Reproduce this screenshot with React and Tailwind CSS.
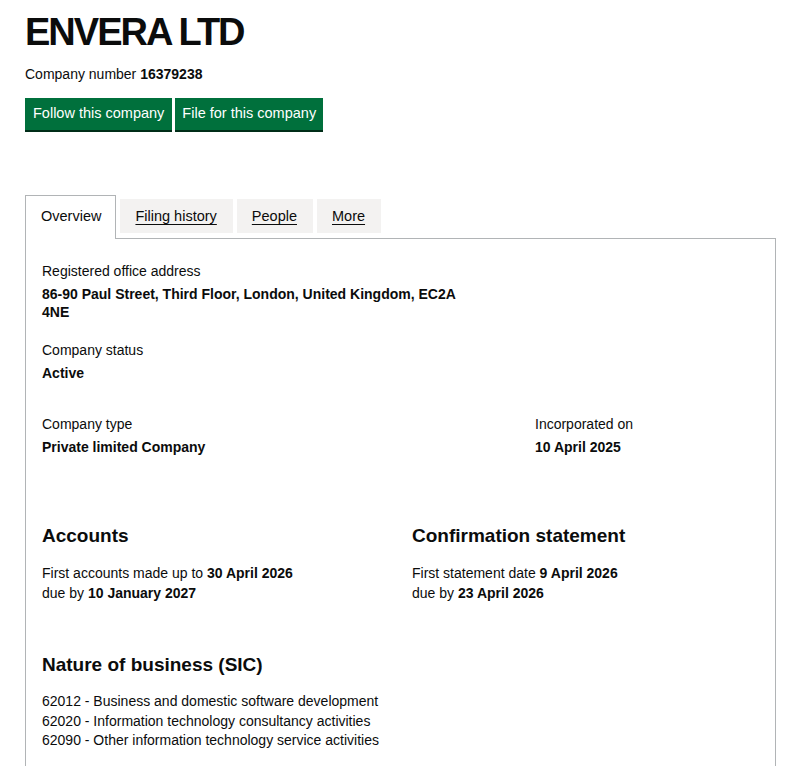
import React from "react";

const tabs = [
  { label: "Overview", active: true },
  { label: "Filing history" },
  { label: "People" },
  { label: "More" },
];

const sic = [
  "62012 - Business and domestic software development",
  "62020 - Information technology consultancy activities",
  "62090 - Other information technology service activities",
];

const Field = ({ label, value, className = "" }) => (
  <div className={className}>
    <div className="text-[14px] leading-[20px]">{label}</div>
    <div className="mt-[4px] text-[14px] leading-[18px] font-bold">{value}</div>
  </div>
);

const App = () => {
  return (
    <div className="min-h-[766px] bg-white text-[#0b0c0c] font-['Liberation_Sans',Arial,sans-serif] px-[25px] pt-[12px]">
      <h1 className="text-[38px] leading-[40px] font-bold tracking-[-2px]">ENVERA LTD</h1>
      <p className="mt-[12px] text-[14px] leading-[20px]">
        Company number <strong>16379238</strong>
      </p>

      <div className="mt-[14px] flex gap-[3px]">
        <button className="h-[32px] px-[8px] bg-[#00703c] text-white text-[14.5px] shadow-[0_2px_0_#002d18]">
          Follow this company
        </button>
        <button className="h-[32px] px-[7px] bg-[#00703c] text-white text-[14.5px] shadow-[0_2px_0_#002d18]">
          File for this company
        </button>
      </div>

      <div className="mt-[65px]">
        <ul className="flex items-start gap-[4px] h-[44px]">
          {tabs.map((t) =>
            t.active ? (
              <li
                key={t.label}
                className="relative z-10 h-[44px] pl-[15px] pr-[14px] pt-[10px] border border-b-0 border-[#b1b4b6] bg-white text-[14.5px]"
              >
                {t.label}
              </li>
            ) : (
              <li
                key={t.label}
                className="mt-[4px] h-[34px] pl-[15px] pr-[16px] pt-[7px] bg-[#f3f2f1] text-[14.5px] underline underline-offset-[3px]"
              >
                {t.label}
              </li>
            )
          )}
        </ul>
        <div className="-mt-px border border-b-0 border-[#b1b4b6] px-[16px] pt-[22px] pb-[40px] w-[751px]">
          <Field
            label="Registered office address"
            value={
              <span className="block w-[430px]">
                86-90 Paul Street, Third Floor, London, United Kingdom, EC2A 4NE
              </span>
            }
          />
          <Field className="mt-[19px]" label="Company status" value="Active" />

          <div className="mt-[32px] flex">
            <Field className="w-[493px]" label="Company type" value="Private limited Company" />
            <Field label="Incorporated on" value="10 April 2025" />
          </div>

          <div className="mt-[68px] flex">
            <div className="w-[370px]">
              <h2 className="text-[19px] leading-[24px] font-bold">Accounts</h2>
              <p className="mt-[15px] text-[14px] leading-[20px]">
                First accounts made up to <strong>30 April 2026</strong>
                <br />
                due by <strong>10 January 2027</strong>
              </p>
            </div>
            <div>
              <h2 className="text-[19px] leading-[24px] font-bold">Confirmation statement</h2>
              <p className="mt-[15px] text-[14px] leading-[20px]">
                First statement date <strong>9 April 2026</strong>
                <br />
                due by <strong>23 April 2026</strong>
              </p>
            </div>
          </div>

          <h2 className="mt-[50px] text-[19px] leading-[24px] font-bold">Nature of business (SIC)</h2>
          <ul className="mt-[15px] text-[14px] leading-[19.5px]">
            {sic.map((s) => (
              <li key={s}>{s}</li>
            ))}
          </ul>
        </div>
      </div>
    </div>
  );
};

export default App;
